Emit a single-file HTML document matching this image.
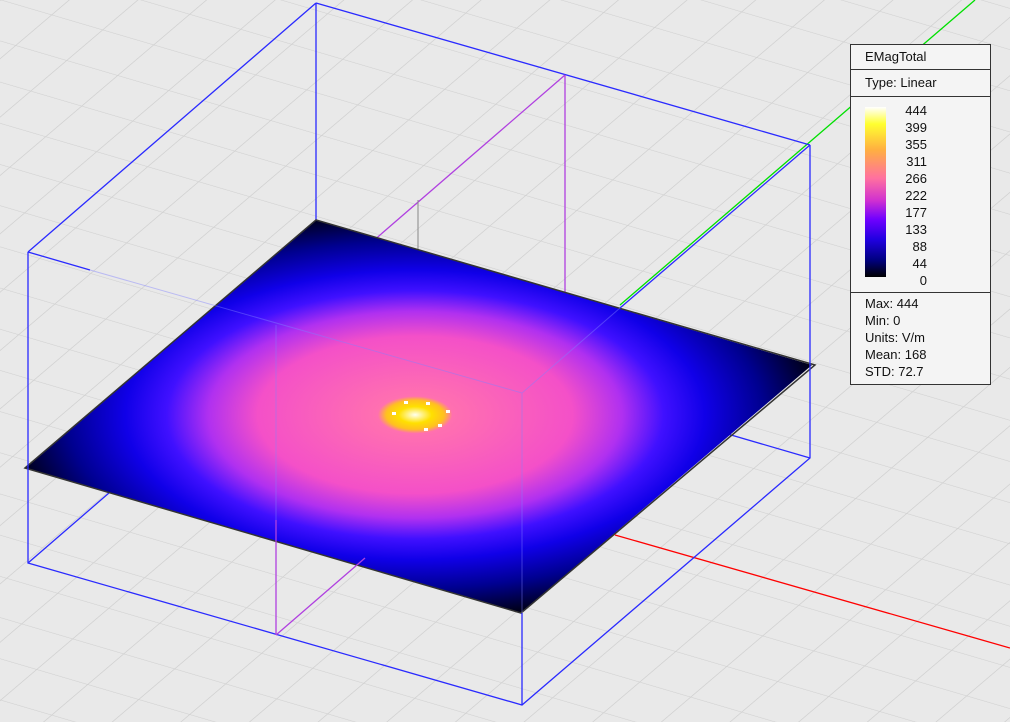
<!DOCTYPE html>
<html><head><style>
body{margin:0;width:1010px;height:722px;overflow:hidden;background:#e9e9e9;font-family:"Liberation Sans",sans-serif}
#leg{position:absolute;left:850px;top:44px;width:139px;height:339px;border:1px solid #333;background:#f4f4f4;font-size:13px;color:#111}
.r{border-bottom:1px solid #333;padding-left:14px}
#cb{position:absolute;left:14px;top:62px;width:21px;height:170px;background:linear-gradient(#fff,#ffff30 10%,#ffb040 25%,#ff70a0 42%,#d030d0 55%,#7000ff 66%,#2000e0 78%,#000080 90%,#000)}
#lab{position:absolute;left:40px;top:57px;width:36px;text-align:right;line-height:17px}
#st{position:absolute;left:14px;top:250px;line-height:17px}
</style></head><body>
<svg width="1010" height="722" style="position:absolute;left:0;top:0">
<defs>
<pattern id="g1" width="36" height="30" patternUnits="userSpaceOnUse" patternTransform="matrix(1,-0.85,1.7,0.5,0,0)">
<path d="M0 0H36M0 0V30" stroke="#d0d0d0" stroke-width="1" fill="none"/>
</pattern>
<radialGradient id="fld" cx="0.502" cy="0.492" r="0.72">
<stop offset="0" stop-color="#fffff0"/>
<stop offset="0.04" stop-color="#ffe000"/>
<stop offset="0.07" stop-color="#ffc020"/>
<stop offset="0.09" stop-color="#ff70b0"/>
<stop offset="0.38" stop-color="#f450c8"/>
<stop offset="0.5" stop-color="#b030f0"/>
<stop offset="0.6" stop-color="#4010ff"/>
<stop offset="0.7" stop-color="#1000e8"/>
<stop offset="0.84" stop-color="#000090"/>
<stop offset="1" stop-color="#000008"/>
</radialGradient>
</defs>
<rect width="1010" height="722" fill="url(#g1)"/>
<line x1="620" y1="305" x2="975" y2="0" stroke="#00e000" stroke-width="1.3"/>
<line x1="615" y1="535" x2="1010" y2="648" stroke="#ff0000" stroke-width="1.3"/>
<g stroke="#2a2aff" stroke-width="1.3" fill="none">
<line x1="316" y1="3" x2="316" y2="314"/>
<line x1="316" y1="314" x2="810" y2="458"/>
<line x1="316" y1="314" x2="28" y2="563"/>
<line x1="316" y1="3" x2="810" y2="145"/>
<line x1="316" y1="3" x2="28" y2="252"/>
</g>
<g stroke="#b040e0" stroke-width="1.3">
<line x1="565" y1="75" x2="565" y2="292"/>
<line x1="565" y1="75" x2="276" y2="325"/>
</g>
<line x1="418" y1="200" x2="418" y2="415" stroke="#888" stroke-width="1"/>
<g transform="matrix(291,-248,496,145,25,468)">
<rect x="0" y="0" width="1" height="1" fill="url(#fld)"/>
</g>
<polygon points="25,468 316,220 815,365 521,613" fill="none" stroke="#333" stroke-width="1.5"/>
<g stroke="#2a2aff" stroke-width="1.3" fill="none">
<polyline points="810,145 810,458 522,705 28,563 28,252"/>
<line x1="522" y1="613" x2="522" y2="705"/>
<line x1="28" y1="252" x2="90" y2="270"/>
<line x1="810" y1="145" x2="620" y2="308"/>
</g>
<g stroke="#8080ff" stroke-width="1" fill="none" opacity="0.45">
<line x1="90" y1="270" x2="522" y2="393"/>
<line x1="522" y1="393" x2="522" y2="613"/>
<line x1="522" y1="393" x2="620" y2="308"/>
<line x1="276" y1="325" x2="276" y2="520"/>
</g>
<g stroke="#b040e0" stroke-width="1.3">
<line x1="276" y1="520" x2="276" y2="635"/>
<line x1="276" y1="635" x2="365" y2="558"/>
</g>
<g fill="#fff">
<rect x="404" y="401" width="4" height="3"/><rect x="426" y="402" width="4" height="3"/>
<rect x="446" y="410" width="4" height="3"/><rect x="392" y="412" width="4" height="3"/>
<rect x="424" y="428" width="4" height="3"/><rect x="438" y="424" width="4" height="3"/>
</g>
</svg>
<div id="leg">
<div class="r" style="height:24px;line-height:24px">EMagTotal</div>
<div class="r" style="height:26px;line-height:26px">Type: Linear</div>
<div class="r" style="height:195px;position:relative"></div>
<div id="cb"></div>
<div id="lab">444<br>399<br>355<br>311<br>266<br>222<br>177<br>133<br>88<br>44<br>0</div>
<div id="st">Max: 444<br>Min: 0<br>Units: V/m<br>Mean: 168<br>STD: 72.7</div>
</div>
</body></html>
